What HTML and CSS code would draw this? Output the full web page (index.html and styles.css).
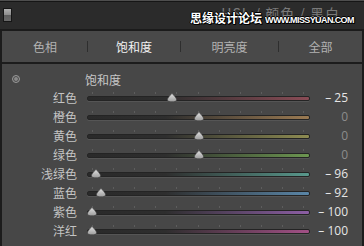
FILE: index.html
```html
<!DOCTYPE html>
<html lang="zh-CN">
<head>
   <meta charset="UTF-8">
   <title>HSL</title>
   <link rel="stylesheet" href="styles.css">
</head>
<body>

<div class="titlebar">
   <span class="toggle"></span>
   <span class="title">HSL / 颜色 / 黑白</span>
   <div class="watermark"><b>思缘设计论坛</b><i>WWW.MISSYUAN.COM</i></div>
</div>

<div class="panel">
   <div class="tabs">
      <span class="tab">色相</span>
      <span class="tab active">饱和度</span>
      <span class="tab">明亮度</span>
      <span class="tab">全部</span>
   </div>

   <div class="section">
      <div class="heading">
         <span class="target"></span>
         <span class="heading-text">饱和度</span>
      </div>

      <div class="row red">
         <span class="label">红色</span>
         <span class="slider"><span class="track"></span><svg class="thumb" style="left:80px" width="10" height="9" viewBox="0 0 10 9"><use href="#knob"/></svg></span>
         <span class="value">– 25</span>
      </div>
      <div class="row orange">
         <span class="label">橙色</span>
         <span class="slider"><span class="track"></span><svg class="thumb" style="left:106.5px" width="10" height="9" viewBox="0 0 10 9"><use href="#knob"/></svg></span>
         <span class="value zero">0</span>
      </div>
      <div class="row yellow">
         <span class="label">黄色</span>
         <span class="slider"><span class="track"></span><svg class="thumb" style="left:106.5px" width="10" height="9" viewBox="0 0 10 9"><use href="#knob"/></svg></span>
         <span class="value zero">0</span>
      </div>
      <div class="row green">
         <span class="label">绿色</span>
         <span class="slider"><span class="track"></span><svg class="thumb" style="left:106.5px" width="10" height="9" viewBox="0 0 10 9"><use href="#knob"/></svg></span>
         <span class="value zero">0</span>
      </div>
      <div class="row aqua">
         <span class="label">浅绿色</span>
         <span class="slider"><span class="track"></span><svg class="thumb" style="left:4.3px" width="10" height="9" viewBox="0 0 10 9"><use href="#knob"/></svg></span>
         <span class="value">– 96</span>
      </div>
      <div class="row blue">
         <span class="label">蓝色</span>
         <span class="slider"><span class="track"></span><svg class="thumb" style="left:8.5px" width="10" height="9" viewBox="0 0 10 9"><use href="#knob"/></svg></span>
         <span class="value">– 92</span>
      </div>
      <div class="row purple">
         <span class="label">紫色</span>
         <span class="slider"><span class="track"></span><svg class="thumb" style="left:0px" width="10" height="9" viewBox="0 0 10 9"><use href="#knob"/></svg></span>
         <span class="value">– 100</span>
      </div>
      <div class="row magenta">
         <span class="label">洋红</span>
         <span class="slider"><span class="track"></span><svg class="thumb" style="left:0px" width="10" height="9" viewBox="0 0 10 9"><use href="#knob"/></svg></span>
         <span class="value">– 100</span>
      </div>
   </div>
</div>

<svg width="0" height="0" class="defs">
   <defs>
      <linearGradient id="knobFill" x1="0" y1="0" x2="0" y2="1">
         <stop offset="0" stop-color="#e2e2e2"/>
         <stop offset="1" stop-color="#9c9c9c"/>
      </linearGradient>
      <path id="knob" d="M5 0.3 C6.4 2.2 9.6 4.8 9.6 6.8 C9.6 8.4 7.6 8.8 5 8.8 C2.4 8.8 0.4 8.4 0.4 6.8 C0.4 4.8 3.6 2.2 5 0.3 Z" fill="url(#knobFill)" stroke="#3a3a3a" stroke-width="0.6"/>
   </defs>
</svg>

</body>
</html>
```

FILE: styles.css
```css
html {
   height: 100%;
   overflow: hidden;
}

body {
   margin: 0;
   width: 364px;
   height: 246px;
   background: #474747;
   font-family: "Noto Sans CJK SC", "Noto Sans", sans-serif;
   font-size: 12px;
   overflow: hidden;
}

.defs {
   position: absolute;
}

.titlebar {
   position: relative;
   height: 28px;
   background: #2b2b2b;
   border-top: 1px solid #4e4e4e;
   box-shadow: inset 0 1px 0 #161616;
   border-bottom: 2px solid #1b1b1b;
   display: flex;
   align-items: center;
   padding: 0 24px 0 3px;
}

.toggle {
   width: 7px;
   height: 12px;
   border: 1px solid #161616;
   background: linear-gradient(#b0b0b0 0%, #8c8c8c 50%, #5e5e5e 52%, #6a6a6a 100%);
}

.title {
   margin-left: auto;
   margin-top: -4px;
   color: #7a7a7a;
   font-size: 14px;
   letter-spacing: 1px;
}

.watermark {
   position: absolute;
   left: 190px;
   top: 8px;
   display: flex;
   align-items: baseline;
   gap: 3px;
   white-space: nowrap;
   color: #fff;
   text-shadow: 1px 0 0 #000, -1px 0 0 #000, 0 1px 0 #000, 0 -1px 0 #000, 1px 1px 0 #000;
}

.watermark b {
   font-size: 12px;
   font-weight: bold;
}

.watermark i {
   font-style: normal;
   font-family: "Liberation Sans", sans-serif;
   font-weight: bold;
   font-size: 9px;
   letter-spacing: -0.6px;
}

.panel {
   border-left: 2px solid #1c1c1c;
   border-right: 2px solid #1c1c1c;
   height: 220px;
}

.tabs {
   display: grid;
   grid-template-columns: 85px 93px 98px 1fr;
   height: 31px;
   background: #494949;
   border-bottom: 2px solid #1c1c1c;
}

.tab {
   display: flex;
   align-items: center;
   justify-content: center;
   color: #b2b2b2;
   border-left: 1px solid transparent;
   position: relative;
}

.tab + .tab::before {
   content: "";
   position: absolute;
   left: -1px;
   top: 10px;
   height: 11px;
   border-left: 1px solid #2e2e2e;
}

.tab.active {
   color: #f2f2f2;
}

.section {
   padding-top: 7px;
}

.heading {
   display: flex;
   align-items: center;
   height: 16px;
   margin-bottom: 1px;
}

.target {
   width: 6px;
   height: 6px;
   margin-left: 10px;
   border-radius: 50%;
   border: 1px solid #9a9a9a;
   box-shadow: inset 0 0 0 1px #474747, inset 0 0 0 3px #8a8a8a;
}

.heading-text {
   margin-left: 65px;
   color: #c6c6c6;
}

.row {
   display: grid;
   grid-template-columns: 85px 223px 38px;
   align-items: center;
   height: 19px;
}

.label {
   text-align: right;
   padding-right: 10px;
   color: #c4c4c4;
}

.slider {
   position: relative;
   height: 19px;
}

.slider::before {
   content: "";
   position: absolute;
   left: 5px;
   top: 4px;
   width: 213px;
   height: 2px;
   background: repeating-linear-gradient(to right, #5d5d5d 0 1px, transparent 1px 21.1px);
}

.track {
   position: absolute;
   left: 0;
   right: 0;
   top: 8px;
   height: 3px;
   border-radius: 2px;
   border: 1px solid #242424;
   background: linear-gradient(to right, #2a2a2a 0%, #2e2e2e 35%, var(--tint) 100%);
   box-shadow: 0 1px 0 #555;
}

.thumb {
   position: absolute;
   top: 5px;
}

.value {
   text-align: right;
   color: #e6e6e6;
   font-family: "Open Sans", "Noto Sans", sans-serif;
   font-size: 12px;
}

.value.zero {
   color: #8c8c8c;
}

.red { --tint: #8a4c56; }
.orange { --tint: #9a7a52; }
.yellow { --tint: #8e8c52; }
.green { --tint: #6c9650; }
.aqua { --tint: #58988c; }
.blue { --tint: #5a86a8; }
.purple { --tint: #8c5ea4; }
.magenta { --tint: #a25086; }
```
